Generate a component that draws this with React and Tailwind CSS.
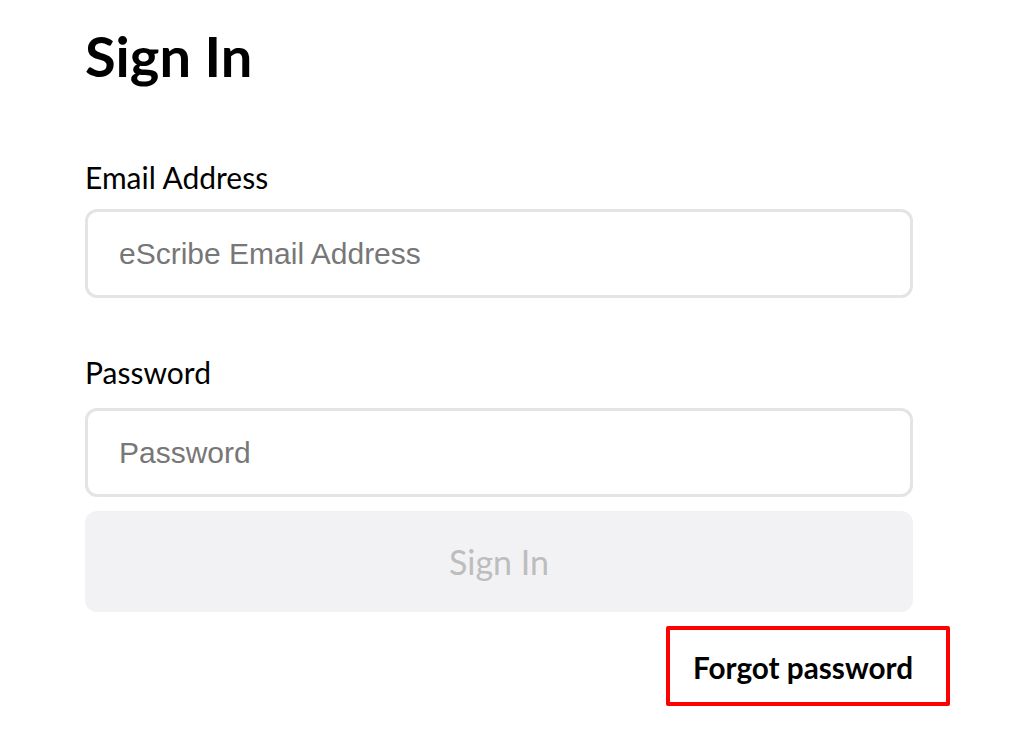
export default function App() {
  return (
    <div className="w-[1012px] h-[733px] bg-white overflow-hidden" style={{ fontFamily: "Lato, 'Liberation Sans', sans-serif" }}>
      <div className="ml-[85px] w-[828px] flex flex-col">
        <h1 className="mt-[24px] text-[56px] leading-[64px] font-bold text-black">Sign In</h1>
        <label className="mt-[71px] text-[30px] leading-[36px] text-black">Email Address</label>
        <div className="mt-[14px] h-[89px] border-[3px] border-[#e4e4e4] rounded-[12px] flex items-center px-[31px]">
          <span className="text-[30px] text-[#777777]" style={{ fontFamily: "'Liberation Sans', Arial, sans-serif" }}>eScribe Email Address</span>
        </div>
        <label className="mt-[56px] text-[30px] leading-[36px] text-black">Password</label>
        <div className="mt-[18px] h-[89px] border-[3px] border-[#e4e4e4] rounded-[12px] flex items-center px-[31px]">
          <span className="text-[30px] text-[#777777]" style={{ fontFamily: "'Liberation Sans', Arial, sans-serif" }}>Password</span>
        </div>
        <button className="mt-[14px] h-[101px] bg-[#f2f2f4] rounded-[12px] flex items-center justify-center text-[34px] text-[#bdbdbd]">Sign In</button>
      </div>
      <div className="ml-[666px] mt-[14px] w-[284px] h-[80px] border-[4px] border-[#ff0000] rounded-[2px] flex items-center pl-[23px] pt-[5px]">
        <span className="text-[29.7px] font-bold text-black">Forgot password</span>
      </div>
    </div>
  );
}
